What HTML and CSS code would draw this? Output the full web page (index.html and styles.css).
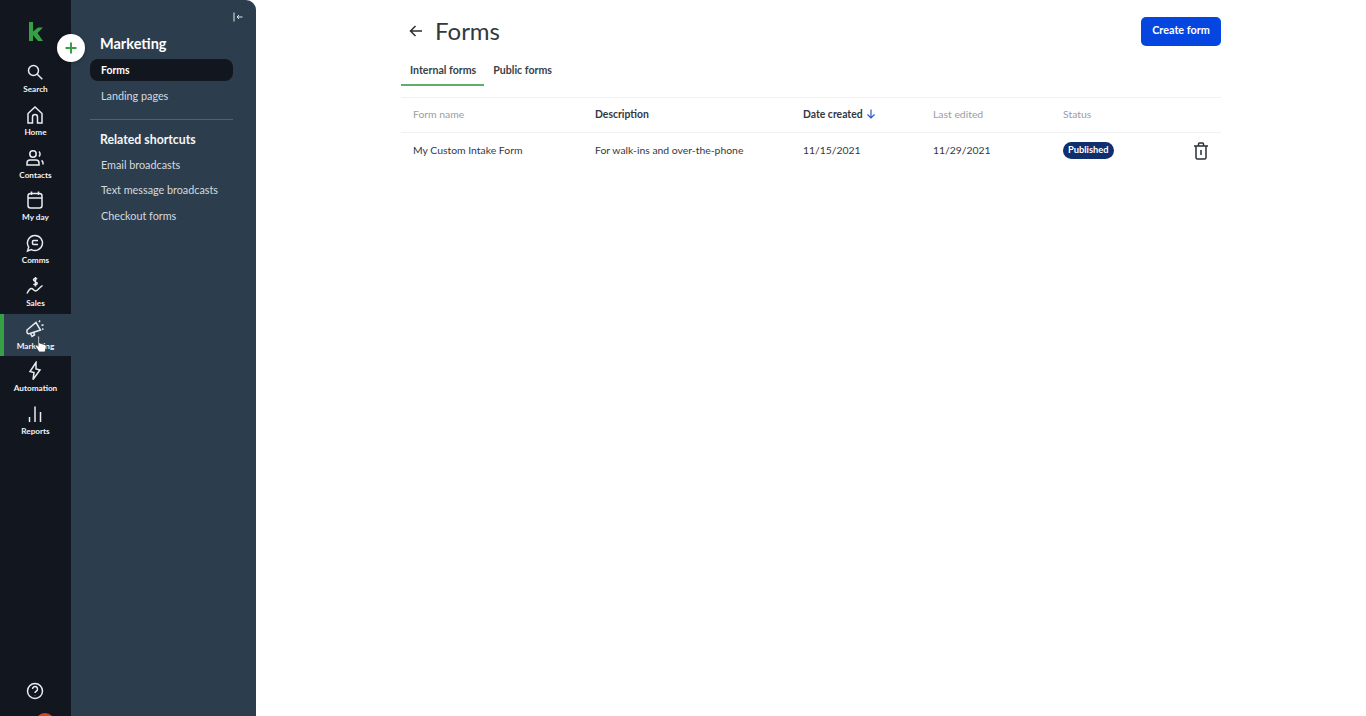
FILE: index.html
```html
<!DOCTYPE html>
<html>
<head>
    <title>Forms</title>
    <link rel="stylesheet" href="styles.css">
</head>
<body>
    <nav class="rail">
        <div class="logo">
            <svg width="16" height="20" viewBox="0 0 16 20"><path d="M1 0h4v9.500L10 5.500h5l-5.500 5.500L15 19h-5l-5-6v6H1z" fill="#37a047"/></svg>
        </div>
        <div class="rail-items">
            <a class="rail-item">
                <svg viewBox="0 0 20 20"><circle cx="8.500" cy="8.500" r="5"/><path d="M12.300 12.300l5 5"/></svg>
                <span>Search</span>
            </a>
            <a class="rail-item">
                <svg viewBox="0 0 20 20"><path d="M3 18V8.500L10 2l7 6.500V18h-4.500v-6a2.500 2.500 0 0 0-5 0v6z"/></svg>
                <span>Home</span>
            </a>
            <a class="rail-item">
                <svg viewBox="0 0 20 20"><circle cx="8" cy="6" r="3.200"/><path d="M2 17v-2a3 3 0 0 1 3-3h6a3 3 0 0 1 3 3v2zM14 3.500a3.500 3.500 0 0 1 0 5M16.500 12.500a3 3 0 0 1 1.500 2.500v1.500"/></svg>
                <span>Contacts</span>
            </a>
            <a class="rail-item">
                <svg viewBox="0 0 20 20"><rect x="3" y="3.500" width="14" height="14.500" rx="2.500"/><path d="M3 8h14M6.500 1.500v3.500M13.500 1.500v3.500"/></svg>
                <span>My day</span>
            </a>
            <a class="rail-item">
                <svg viewBox="0 0 20 20"><path d="M10 2.500a7.500 7.500 0 1 1-3.600 14.100L2.500 18l1.200-3.900A7.500 7.500 0 0 1 10 2.500z"/><path d="M13 7.500H8.500a1 1 0 0 0-1 1v2a1 1 0 0 0 1 1H13"/></svg>
                <span>Comms</span>
            </a>
            <a class="rail-item">
                <svg viewBox="0 0 20 20"><path d="M2 17.500c1.500-3 3-5 4.500-5s2.500 2.500 4 2.500 3-2.500 7-5.500"/><path d="M10.500 1v9.500M8.500 8c1 1 3.700 1 3.700-.8S8.500 5.500 8.500 3.800s2.500-1.600 3.700-.8"/></svg>
                <span>Sales</span>
            </a>
            <a class="rail-item active">
                <svg viewBox="0 0 20 20"><path d="M2 11l9-7.500 4.500 7.500-10.500 3.500a2 2 0 0 1-3-1z"/><path d="M5.500 14.500l1.500 3 2.500-1.500-1-3M14 3l1-1.500M16.500 6.500l2-.8M17 10l1.500.3"/></svg>
                <span>Marketing</span>
            </a>
            <a class="rail-item">
                <svg viewBox="0 0 20 20"><path d="M11 1.500L5 10.500l4 1-1 7 7-9.500-4-1z"/></svg>
                <span>Automation</span>
            </a>
            <a class="rail-item">
                <svg viewBox="0 0 20 20"><path d="M4.500 18v-5M10 18V2.500M15.500 18V8"/></svg>
                <span>Reports</span>
            </a>
        </div>
        <a class="help">
            <svg viewBox="0 0 20 20"><circle cx="10" cy="10" r="7.500"/><path d="M7.500 8a2.500 2.500 0 1 1 3.800 2.100c-.9.600-1.300 1-1.300 2"/><path d="M10 14.200v.3"/></svg>
        </a>
        <div class="avatar"></div>
    </nav>

    <button class="add-btn">
        <svg width="14" height="14" viewBox="0 0 14 14"><path d="M7 1.500v11M1.500 7h11" stroke="#37a047" stroke-width="2" fill="none"/></svg>
    </button>
    <svg class="cursor" width="14" height="18" viewBox="0 0 14 18"><path d="M3.500 1.500c1-.8 2 0 2 1V8l5 1.500c1.500.5 2 1.500 1.700 3L11 17H5L1.500 11.500c-.6-1 .6-2 1.500-1.200l1 1V2.500z" fill="#fff" stroke="#333" stroke-width=".8"/></svg>

    <aside class="panel">
        <div class="collapse">
            <svg width="10" height="10" viewBox="0 0 10 10"><path d="M1 .5v9M9.500 5H4M6 3L4 5l2 2" stroke="#dfe4e8" stroke-width="1" fill="none"/></svg>
        </div>
        <h2>Marketing</h2>
        <a class="panel-link current">Forms</a>
        <a class="panel-link">Landing pages</a>
        <hr>
        <h3>Related shortcuts</h3>
        <a class="panel-link">Email broadcasts</a>
        <a class="panel-link">Text message broadcasts</a>
        <a class="panel-link">Checkout forms</a>
    </aside>

    <main class="content">
        <div class="head">
            <div class="title">
                <svg width="14" height="14" viewBox="0 0 14 14"><path d="M13 7H1.500M6.500 2L1.500 7l5 5" stroke="#2a2f36" stroke-width="1.500" fill="none"/></svg>
                <h1>Forms</h1>
            </div>
            <button class="create">Create form</button>
        </div>
        <div class="tabs">
            <a class="tab selected">Internal forms</a>
            <a class="tab">Public forms</a>
        </div>
        <div class="table">
            <div class="row header">
                <div class="muted">Form name</div>
                <div>Description</div>
                <div>Date created
                    <svg class="sort" width="10" height="10" viewBox="0 0 10 10"><path d="M5 .5v8.500M1.500 5.500L5 9l3.500-3.500" stroke="#2a5bc4" stroke-width="1.200" fill="none"/></svg>
                </div>
                <div class="muted">Last edited</div>
                <div class="muted">Status</div>
                <div></div>
            </div>
            <div class="row">
                <div>My Custom Intake Form</div>
                <div>For walk-ins and over-the-phone</div>
                <div>11/15/2021</div>
                <div>11/29/2021</div>
                <div class="status"><span class="badge">Published</span></div>
                <div class="trash">
                    <svg width="16" height="18" viewBox="0 0 16 18"><path d="M1 4h14M5.500 4V2a1 1 0 0 1 1-1h3a1 1 0 0 1 1 1v2M3 4v11.500A1.500 1.500 0 0 0 4.500 17h7a1.500 1.500 0 0 0 1.500-1.500V4M8 8v5" stroke="#2a2f36" stroke-width="1.500" fill="none"/></svg>
                </div>
            </div>
        </div>
    </main>
</body>
</html>
```
FILE: styles.css
```css
* {
    box-sizing: border-box;
}
html, body {
    height: 100%;
}
body {
    display: flex;
    margin: 0;
    height: 716px;
    overflow: hidden;
    background-color: #fff;
    font-family: 'Lato', 'Open Sans', sans-serif;
    font-size: 10.400px;
    color: #33383f;
}
.rail {
    position: relative;
    display: flex;
    flex-direction: column;
    flex: 0 0 71px;
    background-color: #12171f;
    overflow: hidden;
}
.logo {
    height: 57px;
    padding: 22px 0 0 28px;
}
.rail-item {
    display: flex;
    flex-direction: column;
    align-items: center;
    height: 42.750px;
    padding-top: 5px;
    color: #f2f4f5;
    font-size: 8.200px;
    font-weight: 700;
}
.rail-item svg, .help svg {
    width: 20px;
    height: 20px;
    margin-left: -1px;
    fill: none;
    stroke: #e9ecee;
    stroke-width: 1.500;
}
.rail-item span {
    margin-top: 1px;
    line-height: 12px;
}
.rail-item.active {
    background-color: #2c3e4e;
    border-left: 4px solid #37a047;
    padding-right: 4px;
}
.help {
    display: flex;
    justify-content: center;
    margin-top: auto;
    margin-bottom: 15px;
}
.avatar {
    position: absolute;
    left: 35px;
    top: 713px;
    width: 20px;
    height: 20px;
    border-radius: 50%;
    background-color: #d2491c;
}
.add-btn {
    position: absolute;
    left: 57px;
    top: 34px;
    z-index: 2;
    display: flex;
    align-items: center;
    justify-content: center;
    width: 28px;
    height: 28px;
    padding: 0;
    border: none;
    border-radius: 50%;
    background-color: #fff;
    box-shadow: 0 1px 4px rgba(0, 0, 0, 0.3);
}
.cursor {
    position: absolute;
    left: 34px;
    top: 335px;
    z-index: 2;
}
.panel {
    flex: 0 0 185px;
    padding: 35px 23px 0 19px;
    background-color: #2c3e4e;
    border-top-right-radius: 10px;
    color: #d5dade;
    position: relative;
}
.collapse {
    position: absolute;
    top: 12px;
    right: 13px;
    line-height: 0;
}
.panel h2 {
    margin: 0 0 7px 10px;
    font-size: 14.500px;
    line-height: 17px;
    font-weight: 700;
    color: #fff;
}
.panel h3 {
    margin: 0 0 3px 10px;
    font-size: 12.300px;
    line-height: 22px;
    font-weight: 700;
    color: #f5f6f7;
}
.panel-link {
    display: block;
    height: 22px;
    margin-bottom: 3.500px;
    padding-left: 11px;
    line-height: 21px;
    font-size: 10.800px;
}
.panel-link.current {
    background-color: #12171f;
    border-radius: 8px;
    color: #fff;
    font-weight: 700;
    font-size: 10.400px;
    line-height: 23px;
}
.panel hr {
    margin: 12px 0 9px;
    border: none;
    border-top: 1px solid #51616e;
}
.content {
    flex: 1;
    padding: 17px 145px 0;
}
.head {
    display: flex;
    justify-content: space-between;
    align-items: flex-start;
    height: 42px;
}
.title {
    display: flex;
    align-items: center;
    gap: 12px;
    height: 27px;
    padding-left: 8px;
}
.title h1 {
    margin: 0;
    font-size: 24px;
    font-weight: 400;
    color: #33383f;
}
.create {
    width: 80px;
    height: 29px;
    padding: 0 0 5px;
    border: none;
    border-radius: 5px;
    background-color: #0546e0;
    color: #fff;
    font-family: inherit;
    font-size: 10.800px;
    font-weight: 700;
}
.tabs {
    display: flex;
    height: 27px;
}
.tab {
    padding: 4px 8px 0 9px;
    line-height: 14px;
    font-size: 10.600px;
    font-weight: 700;
    color: #3a3f46;
}
.tab.selected {
    border-bottom: 2px solid #5fae6b;
}
.table {
    margin-top: 11px;
    border-top: 1px solid #f0f1f2;
}
.row {
    display: grid;
    grid-template-columns: 182px 208px 130px 130px 1fr 30px;
    align-items: center;
    height: 35px;
    padding-left: 12px;
    padding-bottom: 1px;
    border-bottom: 1px solid #f0f1f2;
}
.row.header {
    padding-bottom: 2px;
}
.row:last-child {
    border-bottom: none;
}
.header {
    font-weight: 700;
}
.header .muted {
    font-weight: 400;
    color: #9a9da1;
}
.sort {
    vertical-align: -1px;
    margin-left: 1px;
}
.status {
    padding-top: 1px;
}
.badge {
    display: inline-block;
    padding: 0 5px;
    height: 17px;
    line-height: 16px;
    border-radius: 9px;
    background-color: #0f2f6e;
    color: #fff;
    font-size: 9.300px;
    font-weight: 700;
}
.trash {
    padding: 1px 0 0 2px;
    line-height: 0;
}
```
